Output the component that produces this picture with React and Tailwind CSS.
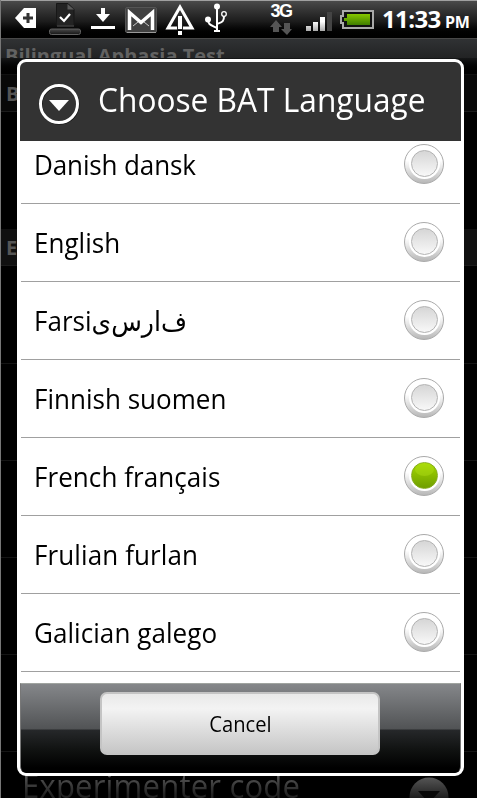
const languages = [
  { name: 'Danish dansk', spacing: 'tracking-[-0.15px]' },
  { name: 'English', spacing: 'tracking-[0px]' },
  { name: 'Farsi', spacing: 'tracking-[0px]', native: ['ف', 'ا', 'ر', 'س', 'ی'] },
  { name: 'Finnish suomen', spacing: 'tracking-[0px]' },
  { name: 'French français', spacing: 'tracking-[0.05px]' },
  { name: 'Frulian furlan', spacing: 'tracking-[0.1px]' },
  { name: 'Galician galego', spacing: 'tracking-[0.05px]' },
];
const selectedLanguage = 'French français';

function StatusBar() {
  return (
    <header className="flex h-[38px] shrink-0 items-start border-t border-[#a0a0a0] bg-linear-to-b from-[#4a4a4a] via-[#1c1c1c] via-55% to-black text-white">
      <svg className="h-[37px] w-[232px] shrink-0" viewBox="0 1 232 37">
        <defs>
          <linearGradient id="tray" x1="0" y1="0" x2="0" y2="1">
            <stop offset="0" stopColor="#4a4a4a" />
            <stop offset="1" stopColor="#151515" />
          </linearGradient>
        </defs>
        {/* label */}
        <path d="M15 18 24 8h12v20H24Z" fill="#fff" />
        <path d="M23 18h10M28 13v10" stroke="#333" strokeWidth="3" />
        {/* document */}
        <path d="M56.500 3.500H68l6 6v16H56.500Z" fill="#232323" stroke="#171717" />
        <path d="M67.500 4v5.500H74Z" fill="#5a5a5a" />
        <path d="M57 26h17" stroke="#555" />
        <path d="m60 17 4 4 6-7" fill="none" stroke="#fff" strokeWidth="2.2" />
        <rect x="49.500" y="29" width="31" height="5.500" rx="2" fill="url(#tray)" stroke="#606060" />
        {/* download */}
        <path d="M101 8h4v6h5l-7 8-7-8h5ZM91 26h24v3H91Z" fill="#fff" />
        {/* mail */}
        <rect x="125.500" y="7.500" width="31" height="25" rx="1.500" fill="#414141" stroke="#555" />
        <path d="M127 32.500h29" stroke="#999" />
        <path d="m133 26 5-4M149 26l-5-4" stroke="#ccc" strokeWidth="1" />
        <path d="M129.500 30V12.500L141 22.500l11.500-10V30" fill="none" stroke="#fff" strokeWidth="3.500" />
        {/* alert */}
        <path d="M180 7 168 28h24Z" fill="none" stroke="#fff" strokeWidth="3" />
        <path d="M177 16h6v14h-6Z" fill="#222" />
        <path d="M178 16h4v13h-4ZM178 31h4v4h-4Z" fill="#fff" />
        {/* usb */}
        <circle cx="217" cy="6.500" r="3" fill="#fff" />
        <path d="M217 6v25M214 31h6M208 19c0 6 3 6 9 9M224 16c0 6-2 6-7 8" fill="none" stroke="#fff" strokeWidth="2" />
        <circle cx="208" cy="19.500" r="3" fill="#fff" />
        <circle cx="224" cy="14" r="2.300" fill="#222" stroke="#fff" strokeWidth="1.300" />
      </svg>
      <div className="ml-[37px] flex w-[24px] flex-col items-center">
        <span className="h-[18px] font-['Liberation_Sans',sans-serif] text-[18px] leading-[20px] font-bold tracking-[-1.5px]">3G</span>
        <svg className="h-[16px] w-[24px]" viewBox="0 0 24 16">
          <path d="m7 1 6 7h-3v5H4V8H1ZM18 16l-6-6h3V4h6v6h2Z" fill="#555" />
        </svg>
      </div>
      <svg className="ml-[12px] h-[37px] w-[70px] shrink-0" viewBox="305 1 70 37">
        <defs>
          <linearGradient id="bars" x1="0" y1="12" x2="0" y2="31" gradientUnits="userSpaceOnUse">
            <stop offset="0" stopColor="#fff" />
            <stop offset=".5" stopColor="#fff" />
            <stop offset="1" stopColor="#aaa" />
          </linearGradient>
          <linearGradient id="charge" x1="0" y1="0" x2="0" y2="1">
            <stop offset="0" stopColor="#87c800" />
            <stop offset="1" stopColor="#3f7d00" />
          </linearGradient>
        </defs>
        <path d="M306 26h5v5h-5ZM313 22h5v9h-5ZM320 17h5v14h-5Z" fill="url(#bars)" />
        <path d="M327 12h5v19h-5Z" fill="#444" />
        <path d="M343 11h30v17h-30v-5h-2v-7h2Z" fill="#111" stroke="#aaa" strokeWidth="2" />
        <path d="M347 14h23v11h-23v-4h-3v-3h3Z" fill="url(#charge)" />
      </svg>
      <div className="ml-[7px] flex items-baseline font-['Open_Sans',sans-serif] leading-[36px] font-bold whitespace-nowrap">
        <span className="w-[63px] text-[24px] tracking-[-0.6px]">11:33</span>
        <span className="text-[16px] tracking-[-0.3px]">PM</span>
      </div>
    </header>
  );
}

function Backdrop() {
  return (
    <div className="flex min-h-0 flex-1 flex-col font-['Open_Sans',sans-serif] text-[#555]">
      <div className="h-[20px] border-t border-[#484848] bg-linear-to-b from-[#303234] to-[#222324] pl-[5px] text-[20px] leading-[34px] font-bold whitespace-nowrap text-[#626262]">
        Bilingual Aphasia Test
      </div>
      <div className="h-[17px] border-b border-[#111] bg-linear-to-b from-[#161718] to-black" />
      <div className="h-[37px] border-b border-[#1b1b1b] bg-[#080808] pl-[6px] text-[20px] leading-[37px] font-bold">B</div>
      <div className="h-[117px]" />
      <div className="h-[37px] border-b border-[#1b1b1b] bg-[#101010] pl-[6px] text-[20px] leading-[37px] font-bold">E</div>
      <div className="h-[98px] border-b border-[#151515]" />
      <div className="h-[97px] border-b border-[#151515]" />
      <div className="h-[97px] border-b border-[#151515]" />
      <div className="h-[97px] border-b border-[#151515]" />
      <div className="h-[97px] border-b border-[#151515]" />
      <div className="flex h-[46px] justify-between pt-[14px] pr-[28px] pl-[22px]">
        <span className="origin-left scale-x-[0.97] bg-linear-to-b from-[#555] from-30% to-[#222] to-90% bg-clip-text text-[32px] leading-[40px] tracking-[0.2px] whitespace-nowrap text-transparent">Experimenter code</span>
        <svg className="mt-[11px] h-[40px] w-[40px] shrink-0" viewBox="0 0 40 40">
          <defs>
            <linearGradient id="knob" x1="0" y1="0" x2="0" y2="1">
              <stop offset="0" stopColor="#555" />
              <stop offset=".6" stopColor="#151515" />
            </linearGradient>
          </defs>
          <circle cx="20" cy="20" r="19.500" fill="url(#knob)" />
          <path d="M9 14h22L20 26Z" fill="#080808" />
        </svg>
      </div>
    </div>
  );
}

function Radio({ selected }) {
  return (
    <span className="-mt-[2px] flex size-[40px] shrink-0 items-center justify-center rounded-full border border-[#aaa] bg-linear-to-b from-white from-40% to-[#b8b8b8]">
      <span className="flex size-[31px] items-center justify-center rounded-full bg-white">
        {selected ? (
          <span className="flex size-[27px] justify-center rounded-full border border-[#86ac20] bg-linear-to-b from-[#a4d900] to-[#6f9e00]">
            <span className="h-[13px] w-[19px] rounded-[50%] bg-[#b4e21a]/40" />
          </span>
        ) : (
          <span className="size-[27px] rounded-full border border-[#b2b2b2] bg-linear-to-b from-[#d6d6d6] to-[#f8f8f8]" />
        )}
      </span>
    </span>
  );
}

function LanguageRow({ language }) {
  return (
    <li className="flex h-[78px] shrink-0 items-center justify-between border-b border-[#a0a0a0] pr-[16px] pl-[13px]">
      <span className="flex origin-left scale-x-[0.93] items-baseline pb-[2px] whitespace-nowrap">
        <span className={`text-[28px] ${language.spacing}`}>{language.name}</span>
        {language.native && (
          <span dir="rtl" className="flex font-['DejaVu_Sans',sans-serif] text-[27px] leading-[30px]">
            {language.native.map((letter) => (
              <span key={letter} className="inline-block">{letter}</span>
            ))}
          </span>
        )}
      </span>
      <Radio selected={language.name === selectedLanguage} />
    </li>
  );
}

function LanguageDialog() {
  return (
    <section className="absolute top-[59px] left-[17px] flex h-[717px] w-[447px] flex-col overflow-hidden rounded-[9px] border-3 border-white bg-white font-['Open_Sans',sans-serif]">
      <div className="flex h-[79px] shrink-0 items-center bg-[#333] pl-[18px] text-white">
        <svg className="mt-[5px] h-[42px] w-[42px]" viewBox="0 0 42 42">
          <circle cx="21.500" cy="21.500" r="18.500" fill="none" stroke="#111" strokeWidth="3" />
          <circle cx="21" cy="21" r="18.500" fill="none" stroke="#fff" strokeWidth="3" />
          <path d="M11 17h20L21 28Z" fill="#fff" />
        </svg>
        <h1 className="-mt-[3px] ml-[18px] origin-left scale-x-[0.96] text-[33px] whitespace-nowrap">Choose BAT Language</h1>
      </div>
      <div className="flex h-[542px] shrink-0 flex-col overflow-hidden px-px">
        <ul className="-mt-[15px]">
          {languages.map((language) => (
            <LanguageRow key={language.name} language={language} />
          ))}
        </ul>
      </div>
      <div className="flex min-h-0 flex-1 flex-col rounded-b-[6px] border-x border-t border-x-[#777] border-t-[#a0a4a0] bg-black bg-[linear-gradient(#85878a,#515355_45px,#26282a_46px,#101211_66px,#000_84px)]">
        <button className="mt-[8px] ml-[79px] h-[63px] w-[280px] rounded-[7px] border-2 border-[#c4c4c4] bg-linear-to-b from-[#e9e9e9] via-[#f3f3f3] via-25% to-[#c6c6c6] pt-[2px] text-[21px] text-black">
          <span className="inline-block scale-x-[0.96]">Cancel</span>
        </button>
      </div>
    </section>
  );
}

export default function App() {
  return (
    <main className="h-[800px] w-[480px] overflow-hidden bg-white">
      <div className="relative flex h-[798px] w-[477px] flex-col overflow-hidden bg-black">
        <StatusBar />
        <Backdrop />
        <LanguageDialog />
        <div className="absolute inset-y-0 left-0 w-px bg-[#777]" />
      </div>
    </main>
  );
}
